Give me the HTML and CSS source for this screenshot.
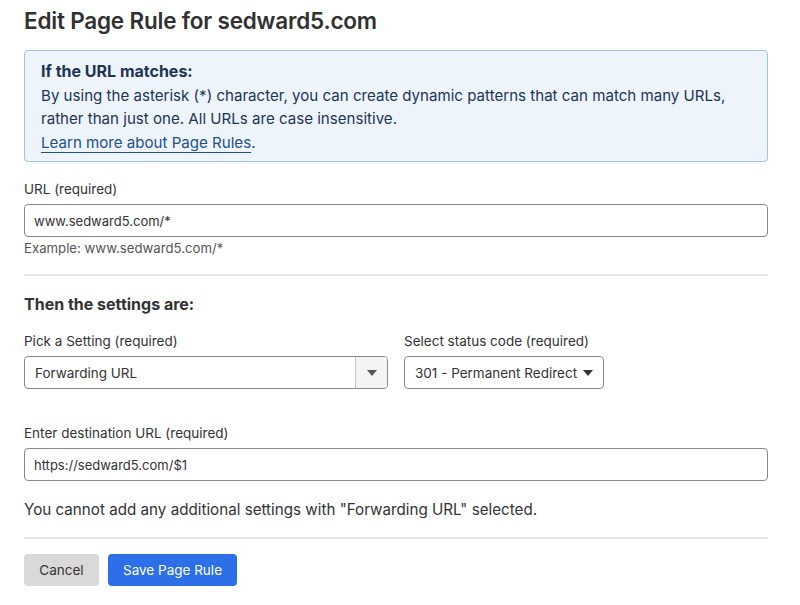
FILE: index.html
```html
<!DOCTYPE html>
<html>
<head>
<meta charset="utf-8">
<link rel="stylesheet" href="styles.css">
</head>
<body>
<div class="page">
  <h1 class="title">Edit Page Rule for sedward5.com</h1>
  <div class="info">
    <div class="info-head">If the URL matches:</div>
    <div class="info-text">By using the asterisk (*) character, you can create dynamic patterns that can match many URLs, rather than just one. All URLs are case insensitive.</div>
    <div class="info-text"><a class="link" href="#">Learn more about Page Rules</a>.</div>
  </div>

  <div class="field url-field">
    <label class="label">URL (required)</label>
    <div class="input">www.sedward5.com/*</div>
    <div class="hint">Example: www.sedward5.com/*</div>
  </div>

  <hr class="divider">

  <h2 class="subhead">Then the settings are:</h2>

  <div class="row">
    <div class="field setting">
      <label class="label">Pick a Setting (required)</label>
      <div class="select-box">
        <span class="select-value">Forwarding URL</span>
        <span class="select-btn"><span class="caret"></span></span>
      </div>
    </div>
    <div class="field status">
      <label class="label">Select status code (required)</label>
      <div class="native-select">
        <span class="native-value">301 - Permanent Redirect</span>
        <span class="caret dark"></span>
      </div>
    </div>
  </div>

  <div class="field dest">
    <label class="label">Enter destination URL (required)</label>
    <div class="input">https://sedward5.com/$1</div>
  </div>

  <p class="note">You cannot add any additional settings with "Forwarding URL" selected.</p>

  <hr class="divider bottom">

  <div class="actions">
    <button class="btn cancel">Cancel</button>
    <button class="btn primary">Save Page Rule</button>
  </div>
</div>
</body>
</html>
```

FILE: styles.css
```css
* { box-sizing: border-box; }
html, body { margin: 0; padding: 0; background: #fff; }
body {
  font-family: Inter, "Noto Sans", "Liberation Sans", sans-serif;
  color: #333;
}
.page {
  padding: 6px 32px 0 24px;
  width: 800px;
}
.title {
  margin: 0;
  font-size: 22.5px;
  font-weight: 600;
  color: #313131;
  line-height: 30px;
  letter-spacing: -0.2px;
}
.info {
  margin-top: 14px;
  border: 1px solid #a4c1e8;
  background: #eef4fc;
  border-radius: 4px;
  padding: 9px 16px 7px 16px;
  color: #1d3456;
  font-size: 15.1px;
  line-height: 23.6px;
}
.info-head { font-weight: 700; font-size: 16px; }
.link {
  color: #23508f;
  text-decoration: underline;
  text-decoration-thickness: 1px;
  text-underline-offset: 4px;
}
.field { display: flex; flex-direction: column; }
.label {
  font-size: 13.5px;
  line-height: 18px;
  color: #333;
  margin-bottom: 6px;
}
.url-field { margin-top: 18px; }
.input {
  height: 33px;
  border: 1px solid #8a8a8a;
  border-radius: 4px;
  padding: 0 9px;
  display: flex;
  align-items: center;
  font-size: 13px;
  color: #333;
}
.hint {
  font-size: 13.2px;
  color: #555;
  margin-top: 2px;
  line-height: 18px;
}
.divider {
  border: 0;
  border-top: 2px solid #e6e6e6;
  margin: 17px 0 0 0;
}
.subhead {
  margin: 16px 0 0 0;
  font-size: 16px;
  font-weight: 700;
  color: #333;
  line-height: 24px;
}
.row {
  display: flex;
  gap: 16px;
  margin-top: 16px;
}
.setting { width: 364px; }
.select-box {
  height: 33px;
  border: 1px solid #8a8a8a;
  border-radius: 4px;
  display: flex;
  overflow: hidden;
}
.select-value {
  flex: 1;
  display: flex;
  align-items: center;
  padding-left: 10px;
  font-size: 13.5px;
  color: #333;
}
.select-btn {
  width: 32px;
  border-left: 1px solid #c6c6c6;
  background: #f4f4f4;
  display: flex;
  align-items: center;
  justify-content: center;
}
.caret {
  width: 0;
  height: 0;
  border-left: 5px solid transparent;
  border-right: 5px solid transparent;
  border-top: 6px solid #555;
}
.caret.dark { border-top-color: #333; }
.native-select {
  height: 33px;
  width: 200px;
  border: 1px solid #8a8a8a;
  border-radius: 4px;
  display: flex;
  align-items: center;
  justify-content: space-between;
  padding: 0 10px 0 10px;
  font-size: 13.5px;
  color: #333;
  white-space: nowrap;
}
.dest { margin-top: 35px; }
.note {
  margin: 17px 0 0 0;
  font-size: 15.2px;
  line-height: 24px;
  color: #333;
}
.divider.bottom { margin-top: 15px; }
.actions {
  display: flex;
  gap: 9px;
  margin-top: 15px;
}
.btn {
  font-family: inherit;
  font-size: 13.5px;
  height: 32px;
  border: 0;
  border-radius: 4px;
  padding: 0;
  white-space: nowrap;
}
.cancel { background: #d9d9d9; color: #333; width: 75px; }
.primary { background: #2c6fe9; color: #fff; width: 129px; }
```
